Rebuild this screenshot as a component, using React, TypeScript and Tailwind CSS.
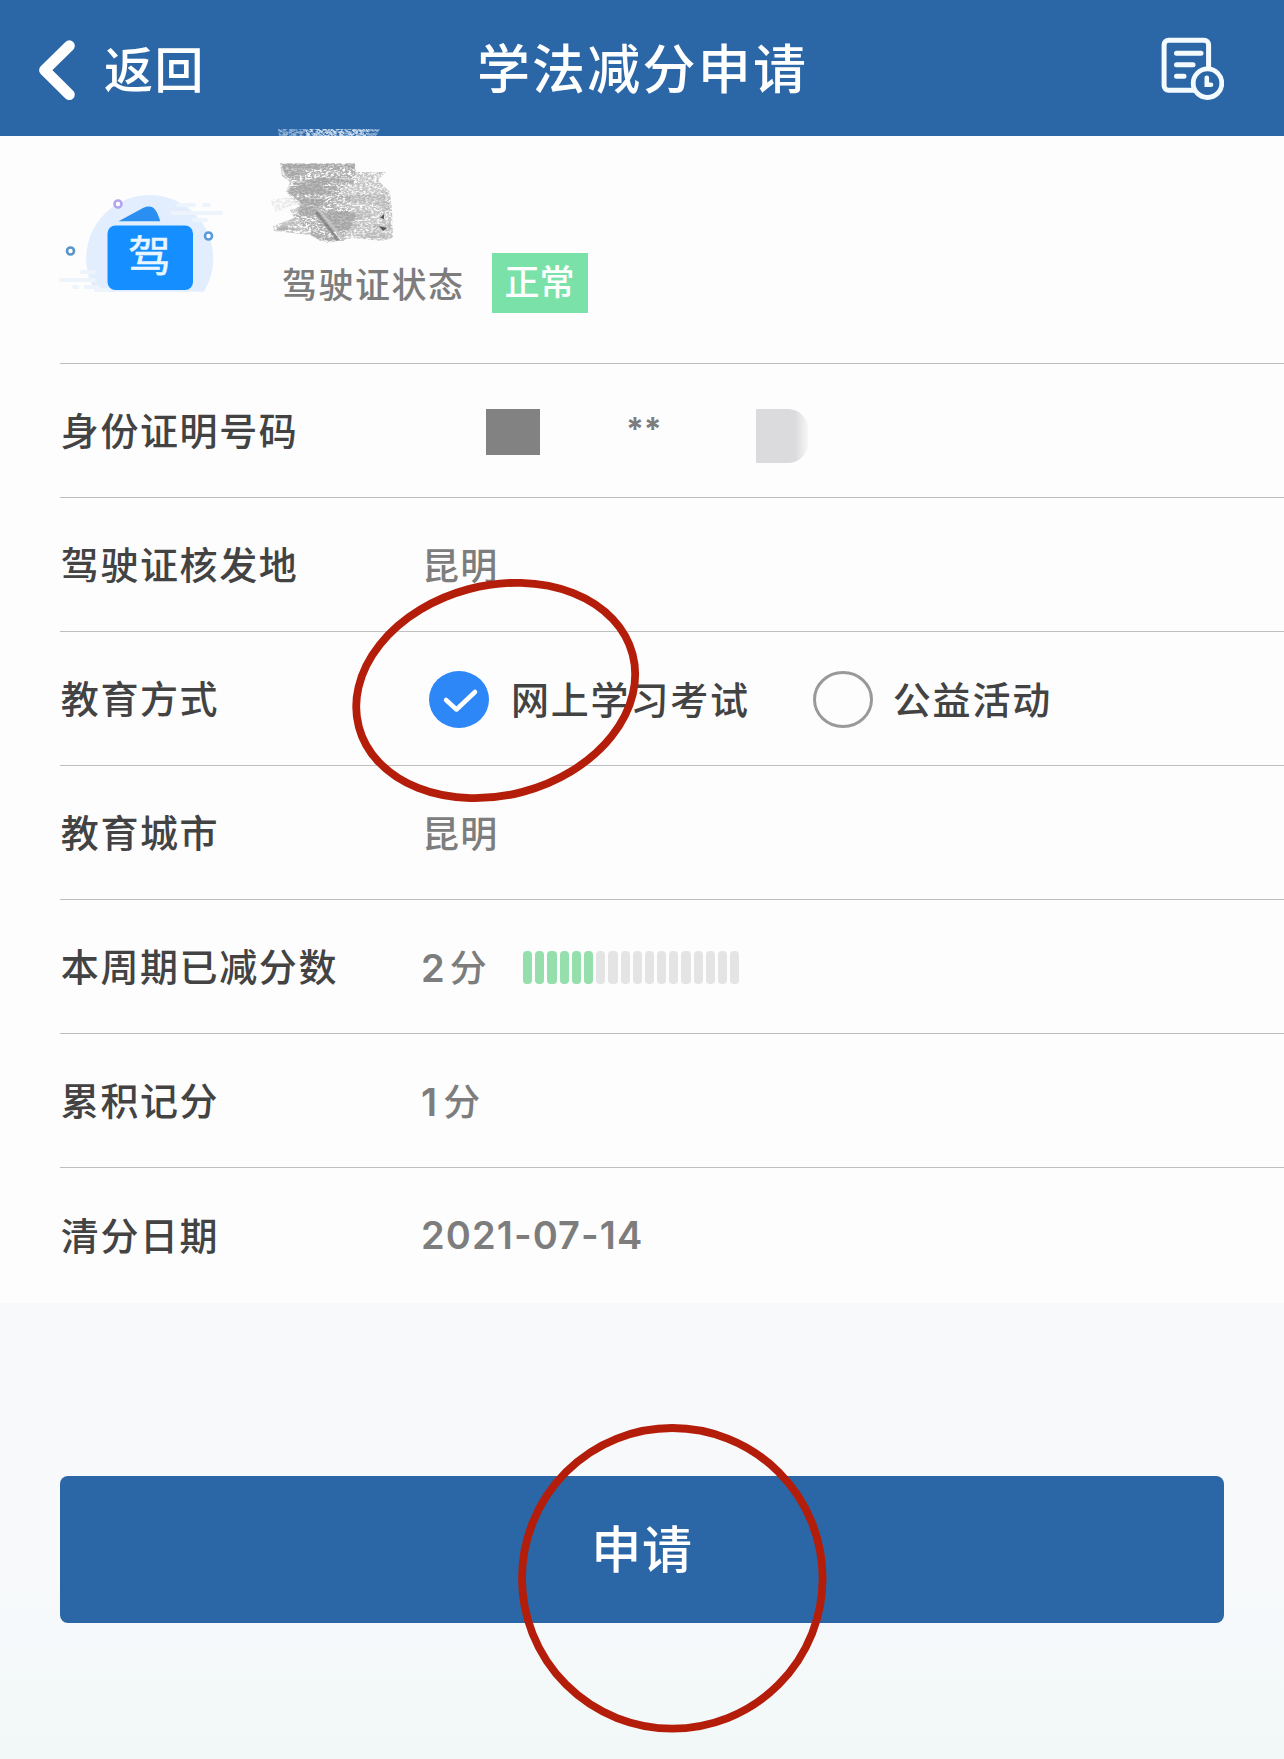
import type { ReactNode } from "react";

const SEGMENTS = Array.from({ length: 18 }, (_, i) => i);

function BackIcon() {
  return (
    <svg className="h-[64px] w-[40px]" viewBox="0 0 40 64" fill="none" stroke="#fff" strokeWidth="11" strokeLinecap="round" strokeLinejoin="round">
      <path d="M32.3 7.800L7.600 32.200L32.300 56.600" />
    </svg>
  );
}

function RecordIcon() {
  return (
    <svg className="h-[68px] w-[68px]" viewBox="0 0 68 68" fill="none" stroke="#f4fbff" strokeLinecap="round">
      <rect x="8.100" y="7.300" width="44.500" height="50" rx="4.500" strokeWidth="5" />
      <path d="M20.500 20.200H45M20.500 31.700H37M20.500 43.200H28" strokeWidth="5" />
      <circle cx="51.500" cy="50.200" r="14.300" fill="#2b67a7" strokeWidth="4.800" />
      <path d="M50.800 44.700V51.700H55" strokeWidth="4.600" />
    </svg>
  );
}

function LicenseArt() {
  return (
    <svg className="h-[110px] w-[172px]" viewBox="0 0 172 110">
      <path d="M41.600 101.700A63.500 63.500 0 1 1 149.800 101.700Z" fill="#e2eefe" />
      <g stroke="#edf4fc" strokeWidth="4" strokeLinecap="round">
        <path d="M124 15H140M150 15H155M118 23H167M140 30H152M28 82H40M7 90H40M20 97H23M32 97H44M42 100H54" />
      </g>
      <path d="M64.500 31.300L89 18Q98 14 102 21Q104 24 106.300 31.300Z" fill="#2a8ff0" />
      <rect x="53.500" y="35.500" width="85.500" height="64.500" rx="8" fill="#158fff" />
      <g fill="#fff" strokeWidth="2.600">
        <circle cx="64" cy="14" r="3.500" stroke="#b3a5ee" />
        <circle cx="154.500" cy="46" r="3.500" stroke="#5b9bda" />
        <circle cx="16.500" cy="61" r="3.500" stroke="#5b93c8" />
      </g>
      <text x="95.500" y="82" textAnchor="middle" fill="#eaf6ff" stroke="#eaf6ff" strokeWidth="0.500" fontSize="43" fontFamily="'Noto Sans CJK SC', sans-serif">驾</text>
    </svg>
  );
}

function Scribble() {
  return (
    <svg className="pointer-events-none absolute left-[260px] top-[120px] h-[130px] w-[150px]" viewBox="0 0 150 130">
      <defs>
        <filter id="grain" x="0" y="0" width="100%" height="100%">
          <feTurbulence type="fractalNoise" baseFrequency="0.35 0.6" numOctaves="4" seed="4" result="n" />
          <feColorMatrix in="n" type="matrix" values="0 0 0 0 0.36  0 0 0 0 0.36  0 0 0 0 0.36  4 0 0 0 -1.300" result="g" />
          <feComposite in="g" in2="SourceGraphic" operator="in" />
        </filter>
        <filter id="patches" x="0" y="0" width="100%" height="100%">
          <feTurbulence type="fractalNoise" baseFrequency="0.03 0.12" numOctaves="5" seed="11" result="n" />
          <feColorMatrix in="n" type="matrix" values="0 0 0 0 0.34  0 0 0 0 0.34  0 0 0 0 0.34  6 0 0 0 -2.500" result="g" />
          <feComposite in="g" in2="SourceGraphic" operator="in" />
        </filter>
        <filter id="chalk" x="0" y="0" width="100%" height="100%">
          <feTurbulence type="fractalNoise" baseFrequency="0.3 0.5" numOctaves="3" seed="9" result="n" />
          <feColorMatrix in="n" type="matrix" values="0 0 0 0 0.85  0 0 0 0 0.92  0 0 0 0 1  4 0 0 0 -1.300" result="g" />
          <feComposite in="g" in2="SourceGraphic" operator="in" />
        </filter>
      </defs>
      <g filter="url(#chalk)">
        <path d="M18 9L120 9L116 16H19Z" opacity="0.500" />
        <path d="M46 9L110 9L106 16H46Z" opacity="0.600" />
      </g>
      <g filter="url(#grain)">
        <path d="M20 43L95 43L96 52L126 52L118 60L130 72L132 90L133 118L122 121L92 118L68 123L50 115L14 111L13 106L34 98L30 90L40 86L26 72L30 62L22 56Z" opacity="0.600" />
        <path d="M22 44H95V56L80 70L90 90L84 121H60L44 108L36 96L42 84L28 72L34 62L24 54Z" opacity="0.600" />
        <path d="M10 80L34 76L38 84L16 92Z" opacity="0.200" />
      </g>
      <g filter="url(#patches)">
        <path d="M22 44H95V56L90 80L96 96L84 121H60L44 110L16 110L36 96L42 84L28 72L34 62L24 54Z" opacity="0.650" />
        <path d="M90 62L128 72L132 118L86 118Z" opacity="0.350" />
      </g>
      <path d="M58 89L84 120" stroke="#c4c4c4" strokeWidth="2.500" />
      <path d="M56 92L78 120" stroke="#707070" strokeWidth="3" opacity="0.600" />
      <path d="M120 98L124 94V99ZM119 106L127 108L123 111Z" fill="#555" />
    </svg>
  );
}

function Row({ label, last, children }: { label: string; last?: boolean; children: ReactNode }) {
  return (
    <div className={`ml-[60px] flex h-[134px] items-center ${last ? "" : "border-b border-[#bfbfc1]"}`}>
      <div className="w-[361px] shrink-0 pb-[3px] pl-[0.800px] text-[38px] leading-[54px] font-medium tracking-[1.600px] text-[#434343]">{label}</div>
      <div className="flex items-center text-[37px] leading-[54px] font-medium tracking-[1.200px] text-[#7d7d7d]">{children}</div>
    </div>
  );
}

function Digits({ children }: { children: ReactNode }) {
  return <span className="font-[Inter] text-[38px] font-semibold tracking-[1.100px]">{children}</span>;
}

export default function App() {
  return (
    <div className="relative h-[1759px] w-[1284px] overflow-hidden bg-gradient-to-b from-[#f7f9fb] from-90% to-[#f2f8f8] font-['Noto_Sans_CJK_SC',sans-serif]">
      <header className="flex h-[136px] items-center justify-between bg-[#2b67a7] px-[37px] text-white">
        <button className="flex w-[263px] items-center pt-[4px]">
          <BackIcon />
          <span className="mb-[7px] ml-[27px] text-[49px] leading-[64px] font-medium tracking-[1.500px]">返回</span>
        </button>
        <h1 className="pb-[4px] pl-px text-[53px] leading-[70px] font-medium tracking-[2.200px]">学法减分申请</h1>
        <div className="flex w-[263px] justify-end pr-[23px] pb-[3px]">
          <RecordIcon />
        </div>
      </header>

      <main className="h-[1167px] bg-[#fdfdfd]">
        <section className="ml-[60px] flex h-[228px] items-start border-b border-[#bfbfc1]">
          <div className="-ml-[6px] pt-[54px]">
            <LicenseArt />
          </div>
          <div className="mt-[117px] ml-[56px] flex items-center">
            <span className="pb-px text-[35px] leading-[59px] font-medium tracking-[1.500px] text-[#7d7d7d]">驾驶证状态</span>
            <span className="ml-[27px] flex h-[60px] w-[96px] items-center justify-center bg-[#7ae1a9] pb-[7px] text-[35px] leading-[50px] font-medium text-white">正常</span>
          </div>
        </section>

        <Row label="身份证明号码">
          <div className="mt-[10px] flex h-[54px] items-start">
            <div className="ml-[65px] h-[46px] w-[54px] bg-[#828282]" />
            <span className="ml-[86px] w-[130px] font-[Inter] text-[32px] leading-[41px] font-bold tracking-[-0.200px]">**</span>
            <div className="h-[54px] w-[52px] rounded-r-[20px] bg-gradient-to-r from-[#dbdbdd] from-75% to-[#f7f7f8]" />
          </div>
        </Row>
        <Row label="驾驶证核发地"><span className="pb-[2px] pl-px">昆明</span></Row>
        <Row label="教育方式">
          <div className="mt-[2px] ml-[8px] flex items-center text-[38px] tracking-[1.800px] text-[#434343]">
            <svg className="h-[57px] w-[60px]" viewBox="0 0 60 57" fill="none">
              <ellipse cx="30" cy="28.500" rx="30" ry="28.500" fill="#2d87f6" />
              <path d="M17 29L27.500 38.500L46 21" stroke="#fff" strokeWidth="4.500" strokeLinecap="round" strokeLinejoin="round" />
            </svg>
            <span className="mb-[4px] ml-[22px]">网上学习考试</span>
            <svg className="ml-[63px] h-[57px] w-[60px]" viewBox="0 0 60 57" fill="none">
              <ellipse cx="30" cy="28.500" rx="28.500" ry="27" stroke="#999" strokeWidth="3" />
            </svg>
            <span className="mb-[4px] ml-[20px]">公益活动</span>
          </div>
        </Row>
        <Row label="教育城市"><span className="pb-[2px] pl-px">昆明</span></Row>
        <Row label="本周期已减分数">
          <span className="w-[102px]"><Digits>2</Digits><span className="ml-[4px]">分</span></span>
          <div className="mt-[2px] flex gap-[3px]">
            {SEGMENTS.map((i) => (
              <span key={i} className={`h-[33px] w-[9.200px] rounded-[4px] ${i < 6 ? "bg-[#94dfac]" : "bg-[#e4e4e4]"}`} />
            ))}
          </div>
        </Row>
        <Row label="累积记分"><span><Digits>1</Digits><span className="ml-[5px]">分</span></span></Row>
        <Row label="清分日期" last><Digits>2021-07-14</Digits></Row>
      </main>

      <button className="mx-[60px] mt-[173px] flex h-[147px] w-[1164px] items-center justify-center rounded-[8px] bg-[#2b67a7] pb-[7px] text-[50px] leading-[70px] font-medium tracking-[0.800px] text-white">
        申请
      </button>

      <Scribble />
      <svg className="pointer-events-none absolute inset-0 h-[1759px] w-[1284px]" viewBox="0 0 1284 1759" fill="none" stroke="#b31d09" strokeWidth="7.800">
        <ellipse cx="495.700" cy="690.500" rx="141.600" ry="104.900" transform="rotate(-14.900 495.700 690.500)" />
        <circle cx="672.300" cy="1578.300" r="150.300" />
      </svg>
    </div>
  );
}
